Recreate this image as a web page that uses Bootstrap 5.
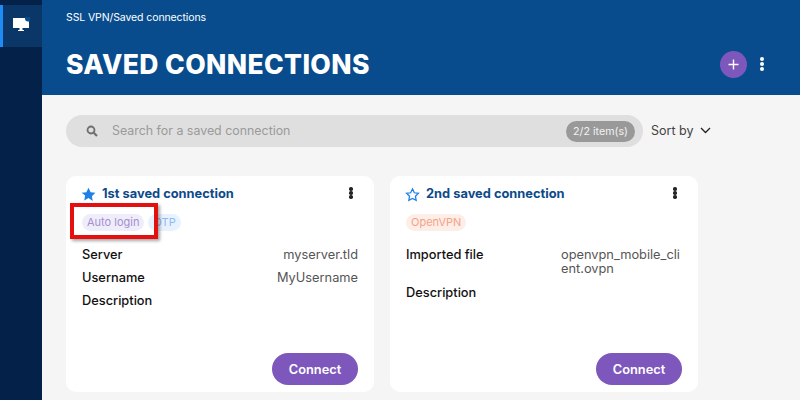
<!DOCTYPE html>
<html lang="en">
<head>
<meta charset="utf-8">
<title>Saved connections</title>
<link href="https://cdn.jsdelivr.net/npm/bootstrap@5.3.0/dist/css/bootstrap.min.css" rel="stylesheet">
<style>
html,body{height:100%;overflow:hidden}
body{font-family:Inter,"Liberation Sans",sans-serif;background:#f5f5f5;color:#111;width:800px;height:400px}
.shell{height:400px}
.rail{width:42px;background:#04214a;flex:none;padding-top:5px}
.rail-item{height:42px;background:#0a3767;border-left:3px solid #1e8cf5;padding:12px 0 0 10px}
.rail-ico{display:block}
.page{flex:1;min-width:0}
.hero{height:95px;background:#084c8e;color:#fff;padding:0 35px 0 24px}
.crumb{font-size:10.5px;line-height:13px;padding-top:11px;letter-spacing:-.1px}
.hero-row{margin-top:18px;height:44px}
.hero-title{font-size:26.5px;font-weight:800;line-height:44px;margin:0;letter-spacing:.4px}
.add-btn{width:27px;height:27px;border-radius:50%;background:#7e57bd;border:0;padding:0;margin-right:12px}
.dots{display:flex;flex-direction:column;gap:1px;align-items:center;width:6px}
.dots i{display:block;width:4px;height:4px;border-radius:50%;background:currentColor}
.dots-sm i{width:3.4px;height:3.4px}
.dots-sm{gap:.6px;margin-bottom:2px}
.body-pad{padding:20px 0 0 24px}
.search-pill{width:577px;height:32px;background:#dfdfdf;border-radius:16px;padding:0 8px 0 20px}
.search-txt{font-size:12.4px;color:#9a9a9a;margin-left:14px;padding-top:1px}
.count-pill{background:#999;color:#f2f2f2;font-size:10.7px;border-radius:11px;height:21px;line-height:21px;padding:0 7px}
.sort{font-size:12.5px;color:#444;margin-left:8px}
.chev{margin-left:7px;margin-bottom:2px}
.cards{margin-top:29px;gap:16px}
.conn{width:308px;height:216px;background:#fff;border:0;border-radius:10px;padding:9px 16px 0 15px;position:relative}
.conn-head{height:18px}
.conn-title{font-size:12.85px;font-weight:700;color:#0c4a8a;margin-left:6px;white-space:nowrap}
.chips{margin-top:11px;gap:4px;padding-left:1px}
.chip{font-size:11px;line-height:17px;height:17px;border-radius:9px;padding:0 5px}
.chip-purple{background:#f0edfa;color:#a38fd0}
.chip-blue{background:#e8f2fe;color:#8fb9ee}
.chip-orange{background:#fdeee8;color:#f5a185}
.kv{font-size:12.8px;line-height:14px;margin-top:9px;padding-left:1px}
.kv-k{font-weight:500;color:#111}
.kv-v{color:#555}
.kv-first{margin-top:17px}
.kv-wide{margin-top:10px}
.kv-file{width:121px;word-break:break-all;color:#555}
.go-btn{position:absolute;right:16px;bottom:7px;width:86px;height:32px;border-radius:16px;background:#7e57bd;color:#fff;border:0;font-size:12.8px;font-weight:600;padding:1px 0 0}
.callout{position:absolute;left:70px;top:203px;width:88px;height:36px;border:4px solid #e40f0f;box-shadow:2px 2px 3px rgba(0,0,0,.35)}
</style>
</head>
<body>
<div class="shell d-flex">
  <nav class="rail">
    <div class="rail-item">
      <svg class="rail-ico" width="17" height="16" viewBox="0 0 17 16" aria-hidden="true">
        <rect x="0" y="1" width="16" height="10" fill="#fff"/>
        <rect x="6.5" y="11" width="3" height="2" fill="#fff"/>
        <rect x="5" y="13" width="6" height="1" fill="#fff"/>
        <circle cx="15" cy="1.5" r="3" fill="#084c8e"/>
      </svg>
    </div>
  </nav>
  <main class="page">
    <header class="hero">
      <div class="crumb">SSL VPN/Saved connections</div>
      <div class="hero-row d-flex align-items-center justify-content-between">
        <h1 class="hero-title">SAVED CONNECTIONS</h1>
        <div class="d-flex align-items-center">
          <button class="add-btn d-flex align-items-center justify-content-center" aria-label="Add">
            <svg width="13" height="13" viewBox="0 0 13 13"><path d="M6.5 1.5v10M1.5 6.5h10" stroke="#fff" stroke-width="1.4"/></svg>
          </button>
          <span class="dots text-white"><i></i><i></i><i></i></span>
        </div>
      </div>
    </header>
    <div class="body-pad">
      <div class="d-flex align-items-center">
        <div class="search-pill d-flex align-items-center">
          <svg width="12" height="12" viewBox="0 0 12 12" aria-hidden="true"><circle cx="5" cy="5" r="3.5" fill="none" stroke="#6f6f6f" stroke-width="1.8"/><path d="M7.7 7.7L11 11" stroke="#6f6f6f" stroke-width="2.2"/></svg>
          <span class="search-txt flex-grow-1">Search for a saved connection</span>
          <span class="count-pill">2/2 item(s)</span>
        </div>
        <span class="sort">Sort by</span>
        <svg class="chev" width="11" height="7" viewBox="0 0 11 7" aria-hidden="true"><path d="M1 1l4.5 4.5L10 1" fill="none" stroke="#222" stroke-width="1.3"/></svg>
      </div>
      <div class="cards d-flex">
        <article class="card conn">
          <div class="conn-head d-flex align-items-center">
            <svg width="15" height="15" viewBox="0 0 24 24" aria-hidden="true"><path d="M12 1l3.4 7.2 7.6 1-5.6 5.4 1.4 7.8L12 17.7l-6.8 3.7 1.4-7.8L1 9.2l7.6-1z" fill="#1e80e6"/></svg>
            <span class="conn-title flex-grow-1">1st saved connection</span>
            <span class="dots dots-sm me-1 text-dark"><i></i><i></i><i></i></span>
          </div>
          <div class="chips d-flex">
            <span class="chip chip-purple">Auto login</span>
            <span class="chip chip-blue">OTP</span>
          </div>
          <div class="kv kv-first d-flex justify-content-between"><span class="kv-k">Server</span><span class="kv-v">myserver.tld</span></div>
          <div class="kv d-flex justify-content-between"><span class="kv-k">Username</span><span class="kv-v">MyUsername</span></div>
          <div class="kv d-flex justify-content-between"><span class="kv-k">Description</span></div>
          <button class="go-btn">Connect</button>
        </article>
        <article class="card conn">
          <div class="conn-head d-flex align-items-center">
            <svg width="15" height="15" viewBox="0 0 24 24" aria-hidden="true"><path d="M12 3l2.9 6.2 6.6.9-4.8 4.6 1.2 6.7-5.9-3.2-5.9 3.2 1.2-6.7-4.8-4.6 6.6-.9z" fill="none" stroke="#1e80e6" stroke-width="2"/></svg>
            <span class="conn-title flex-grow-1">2nd saved connection</span>
            <span class="dots dots-sm me-1 text-dark"><i></i><i></i><i></i></span>
          </div>
          <div class="chips d-flex">
            <span class="chip chip-orange">OpenVPN</span>
          </div>
          <div class="kv kv-first d-flex justify-content-between"><span class="kv-k">Imported file</span><span class="kv-file">openvpn_mobile_client.ovpn</span></div>
          <div class="kv kv-wide d-flex justify-content-between"><span class="kv-k">Description</span></div>
          <button class="go-btn">Connect</button>
        </article>
      </div>
    </div>
  </main>
</div>
<div class="callout"></div>
<script src="https://cdn.jsdelivr.net/npm/bootstrap@5.3.0/dist/js/bootstrap.bundle.min.js"></script>
</body>
</html>
